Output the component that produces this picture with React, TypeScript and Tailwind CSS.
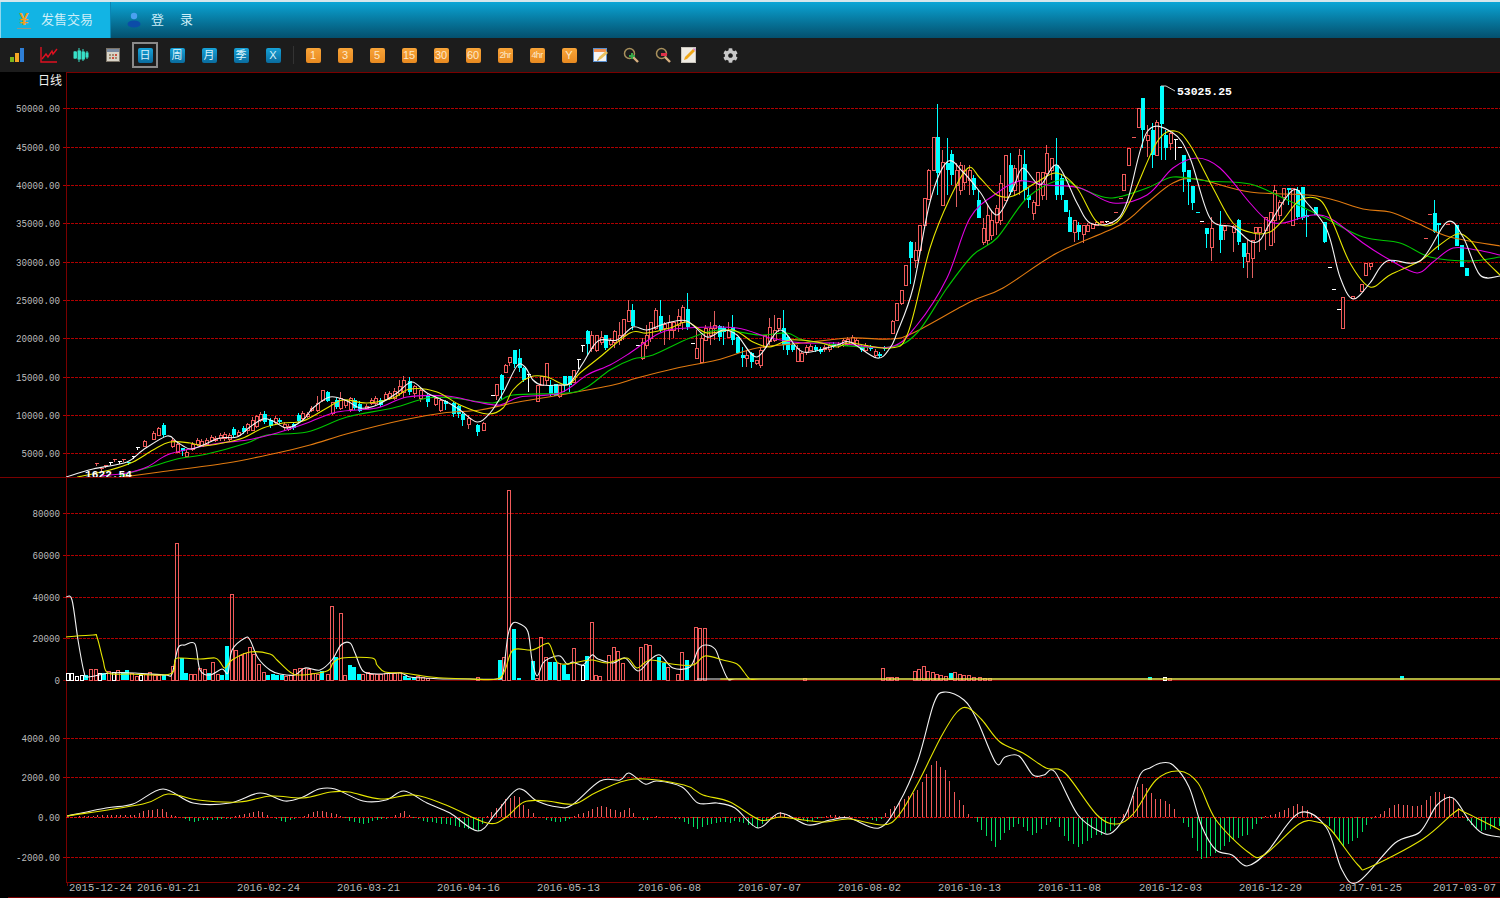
import type { ReactNode } from "react";
import { FaCog } from "react-icons/fa";

type Pt = [number, number];
type Candle = [number, number, number, number, number, "r" | "c" | "w"];

const ma5: Pt[] = [[66,477],[93,469],[127,462],[143,450],[167,436],[177,442],[190,449],[203,445],[220,438],[237,437],[250,427],[263,419],[273,421],[287,428],[303,420],[313,408],[330,397],[347,401],[360,408],[377,405],[397,393],[412,382],[427,393],[447,402],[460,410],[477,422],[490,413],[503,393],[517,366],[525,367],[533,380],[542,385],[560,385],[570,383],[583,363],[598,341],[617,340],[633,327],[647,330],[667,323],[687,321],[707,337],[723,330],[737,335],[757,357],[780,330],[803,352],[837,345],[850,342],[877,358],[890,348],[897,333],[913,288],[930,202],[947,162],[963,172],[980,192],[997,215],[1013,188],[1023,168],[1040,185],[1057,165],[1077,203],[1090,223],[1113,222],[1127,202],[1147,132],[1173,133],[1190,158],[1210,218],[1233,227],[1250,241],[1260,240],[1270,223],[1293,190],[1307,203],[1327,230],[1340,277],[1353,299],[1370,283],[1387,261],[1420,261],[1447,222],[1463,237],[1480,275],[1500,276]];
const ma10: Pt[] = [[77,477],[110,470],[133,462],[153,450],[170,442],[190,443],[203,446],[223,443],[243,438],[263,428],[283,423],[303,421],[327,408],[343,400],[367,403],[393,398],[410,389],[437,392],[460,405],[487,414],[503,408],[513,390],[530,377],[547,377],[567,385],[580,373],[600,357],[630,333],[647,333],[670,328],[687,322],[707,333],[733,330],[753,342],[770,347],[790,340],[817,342],[837,347],[850,343],[890,348],[908,333],[930,248],[950,198],[968,168],[980,178],[997,195],[1013,196],[1037,182],[1057,173],[1077,188],[1097,222],[1117,222],[1133,195],[1157,142],[1175,131],[1190,145],[1213,188],[1233,223],[1253,233],[1270,232],[1283,220],[1300,200],[1320,200],[1333,223],[1350,263],[1370,287],[1390,275],[1420,261],[1437,247],[1457,234],[1470,240],[1483,258],[1500,275]];
const ma20: Pt[] = [[100,476],[127,473],[147,467],[167,455],[190,449],[220,443],[247,440],[277,433],[307,423],[337,412],[377,408],[407,397],[447,396],[477,402],[500,405],[520,397],[560,393],[587,375],[610,365],[630,353],[660,333],[687,328],[737,328],[770,338],[803,343],[837,343],[890,347],[917,325],[947,278],[970,218],[997,193],[1020,181],[1047,185],[1080,188],[1113,203],[1147,195],[1173,168],[1197,158],[1220,168],[1250,203],[1267,220],[1283,223],[1313,215],[1333,220],[1363,243],[1390,260],[1417,273],[1433,262],[1453,248],[1477,250],[1500,255]];
const ma30: Pt[] = [[120,476],[157,465],[177,459],[207,454],[247,443],[267,435],[307,432],[347,417],[393,408],[427,398],[453,398],[493,403],[513,395],[567,393],[587,387],[610,370],[633,359],[653,355],[690,338],[720,330],[760,335],[787,333],[803,340],[837,345],[890,347],[917,333],[947,288],[973,255],[997,238],[1027,198],[1060,180],[1080,188],[1110,198],[1147,188],[1173,177],[1207,181],[1250,184],[1283,198],[1323,217],[1363,237],[1400,243],[1430,257],[1470,261],[1500,257]];
const ma60: Pt[] = [[123,477],[160,472],[227,463],[277,453],[310,445],[350,433],[403,420],[443,413],[480,410],[513,403],[560,395],[613,385],[637,378],[677,368],[717,360],[757,348],[803,343],[850,338],[890,339],[913,333],[970,302],[1003,288],[1057,253],[1120,225],[1147,203],[1173,183],[1197,179],[1250,192],[1317,196],[1363,209],[1390,212],[1417,223],[1450,237],[1500,246]];

const volWhite: Pt[] = [[66,597],[72,600],[78,640],[84,672],[88,677],[110,673],[135,673],[165,675],[172,674],[178,648],[185,645],[195,644],[200,670],[210,675],[222,669],[228,673],[232,650],[245,638],[250,640],[258,658],[270,670],[280,674],[295,675],[305,668],[320,670],[332,660],[341,645],[350,643],[355,653],[363,671],[377,674],[400,673],[410,677],[425,678],[443,679],[470,679],[497,679],[503,673],[508,635],[513,623],[520,624],[528,632],[532,660],[537,676],[543,663],[550,658],[560,656],[567,664],[573,662],[583,665],[592,655],[598,659],[613,663],[625,658],[638,671],[650,660],[660,655],[673,668],[690,667],[698,650],[705,645],[715,649],[721,664],[728,679],[735,679],[760,679],[1500,679]];
const volYellow: Pt[] = [[66,637],[93,635],[97,637],[103,660],[108,673],[130,674],[170,674],[175,660],[180,658],[200,659],[215,658],[220,662],[225,668],[232,660],[250,652],[270,654],[277,660],[290,672],[300,675],[327,671],[333,663],[342,658],[372,658],[377,665],[385,672],[403,673],[423,676],[443,678],[470,679],[497,679],[505,670],[513,650],[532,650],[545,644],[550,645],[557,662],[567,664],[583,661],[593,660],[607,663],[627,658],[637,668],[650,660],[672,664],[693,665],[705,656],[723,660],[737,664],[744,672],[750,679],[760,679],[780,679],[1500,679]];
const volBars: [number, number, "r" | "c" | "w"][] = [[68,673,"w"],[72,673,"w"],[77,676,"w"],[82,675,"w"],[86,675,"c"],[91,669,"r"],[96,669,"r"],[100,673,"w"],[104,673,"c"],[109,671,"r"],[114,672,"w"],[118,670,"r"],[123,672,"c"],[127,670,"c"],[132,673,"r"],[137,676,"r"],[141,675,"w"],[146,674,"r"],[150,672,"r"],[155,675,"r"],[159,675,"r"],[164,675,"c"],[173,666,"r"],[177,543,"r"],[182,658,"c"],[186,673,"c"],[191,674,"r"],[195,674,"r"],[200,668,"r"],[205,669,"r"],[209,673,"c"],[213,662,"r"],[218,674,"r"],[222,675,"c"],[227,646,"c"],[232,594,"r"],[236,650,"r"],[241,655,"r"],[245,653,"r"],[250,647,"r"],[254,654,"r"],[259,664,"r"],[264,672,"r"],[268,675,"c"],[273,674,"c"],[277,675,"c"],[282,675,"c"],[286,676,"r"],[291,675,"r"],[295,669,"r"],[300,668,"r"],[304,668,"r"],[309,669,"r"],[313,673,"r"],[318,674,"r"],[322,671,"c"],[328,674,"r"],[332,606,"r"],[336,657,"c"],[341,613,"r"],[345,675,"r"],[350,665,"c"],[354,667,"c"],[359,674,"c"],[363,674,"r"],[368,672,"r"],[372,674,"r"],[377,674,"r"],[381,674,"r"],[386,673,"r"],[391,673,"r"],[395,673,"r"],[400,672,"r"],[405,676,"c"],[409,678,"c"],[414,677,"c"],[418,676,"r"],[423,677,"r"],[428,678,"r"],[478,677,"r"],[500,660,"c"],[504,657,"r"],[509,490,"r"],[514,629,"c"],[519,678,"c"],[533,661,"c"],[537,678,"r"],[541,637,"r"],[546,657,"r"],[550,662,"c"],[555,662,"c"],[559,663,"r"],[564,665,"c"],[568,674,"c"],[574,648,"r"],[583,665,"w"],[587,656,"c"],[592,622,"r"],[596,675,"r"],[600,676,"r"],[609,655,"r"],[614,647,"r"],[618,651,"r"],[623,663,"r"],[641,647,"r"],[646,644,"r"],[650,645,"r"],[659,657,"c"],[664,663,"c"],[668,667,"r"],[678,674,"r"],[682,652,"r"],[687,660,"c"],[696,627,"r"],[700,628,"r"],[705,628,"r"],[805,678,"r"],[883,668,"r"],[888,677,"r"],[892,677,"r"],[897,677,"r"],[915,671,"r"],[919,669,"r"],[924,666,"r"],[928,671,"r"],[933,672,"r"],[937,674,"r"],[941,675,"r"],[946,676,"r"],[951,673,"c"],[955,672,"r"],[960,674,"r"],[964,675,"r"],[969,675,"r"],[974,677,"r"],[980,677,"r"],[985,678,"r"],[990,678,"r"],[1150,677,"c"],[1165,677,"w"],[1170,678,"r"],[1402,676,"c"]];

const macdWhite: Pt[] = [[67,816],[106,808],[133,804],[163,789],[193,803],[230,803],[260,793],[285,801],[303,797],[319,789],[335,789],[363,801],[386,800],[404,791],[427,803],[450,813],[478,831],[496,813],[518,789],[537,801],[558,807],[572,805],[600,781],[620,780],[629,773],[645,784],[657,781],[682,787],[698,803],[717,803],[735,808],[758,828],[780,813],[808,825],[830,820],[849,818],[879,828],[899,803],[918,760],[934,703],[945,692],[964,700],[977,720],[996,763],[1005,757],[1019,756],[1033,775],[1044,775],[1055,772],[1078,815],[1101,832],[1113,832],[1127,812],[1140,775],[1150,768],[1161,763],[1173,765],[1189,787],[1202,827],[1216,850],[1232,855],[1247,866],[1267,852],[1299,813],[1326,827],[1342,870],[1358,882],[1395,843],[1420,832],[1437,805],[1453,798],[1469,820],[1482,833],[1500,837]];
const macdYellow: Pt[] = [[67,816],[143,804],[168,794],[198,800],[239,802],[271,796],[303,798],[331,792],[349,792],[381,799],[414,795],[446,805],[487,823],[505,818],[524,802],[547,801],[574,804],[597,792],[634,779],[684,785],[703,795],[730,802],[760,820],[780,817],[803,820],[826,822],[849,819],[883,825],[899,815],[918,783],[941,737],[957,712],[968,708],[982,720],[1000,742],[1023,753],[1046,768],[1065,773],[1097,815],[1117,824],[1134,813],[1156,780],[1179,771],[1198,783],[1216,820],[1248,852],[1264,855],[1299,824],[1317,822],[1331,830],[1358,865],[1370,867],[1423,839],[1455,812],[1464,812],[1500,830]];

const candles: Candle[] = [
  [163,423,425,435,437,"c"],[158,427,428,435,435,"r"],[153,431,433,439,439,"r"],[144,440,441,446,447,"r"],[172,438,440,446,448,"r"],[177,442,444,452,452,"r"],[182,448,448,451,456,"c"],[186,450,452,456,456,"r"],
  [247,423,424,430,434,"r"],[252,417,420,430,431,"r"],[256,415,416,426,428,"r"],[260,412,414,420,422,"r"],[264,411,414,422,424,"c"],[270,418,420,426,428,"c"],
  [317,396,403,410,412,"r"],[322,390,390,400,402,"r"],[327,391,392,401,402,"c"],[332,402,402,413,415,"r"],[336,398,400,407,409,"c"],[340,392,398,408,410,"r"],[345,400,400,405,408,"r"],[350,397,398,409,412,"r"],[354,398,400,408,410,"c"],[359,401,404,411,412,"c"],
  [394,388,391,398,400,"r"],[399,380,386,393,396,"r"],[403,376,380,392,398,"r"],[409,377,381,392,395,"c"],[414,385,386,393,398,"r"],[420,388,390,398,402,"r"],[427,394,396,402,407,"c"],[435,396,398,404,406,"r"],[440,398,400,410,412,"r"],[445,400,401,404,410,"c"],[453,402,403,414,417,"c"],[458,405,406,414,418,"c"],[462,412,414,420,426,"c"],[468,415,418,424,429,"r"],
  [477,424,425,432,436,"c"],[483,422,423,430,430,"r"],[492,395,395,395,395,"w"],[496,384,384,395,400,"r"],[501,374,375,390,400,"c"],[505,364,365,372,372,"r"],[509,357,357,362,366,"r"],[514,350,350,364,368,"c"],[519,349,358,368,372,"c"],[523,367,368,380,382,"c"],[528,374,374,374,392,"w"],[537,385,385,401,401,"r"],[541,376,376,385,385,"r"],[546,363,363,380,385,"r"],[550,380,385,394,396,"c"],[555,384,384,396,396,"c"],[559,385,385,396,398,"r"],[564,376,376,385,392,"c"],[569,376,376,385,392,"c"],[573,370,370,382,382,"r"],[578,359,359,359,369,"w"],[582,345,345,345,352,"w"],[587,330,331,344,355,"c"],[591,331,335,348,352,"r"],[596,335,335,350,352,"r"],[601,331,337,342,345,"r"],[605,335,335,348,350,"c"],[610,338,340,344,346,"r"],[614,330,331,342,348,"r"],[619,322,335,340,345,"r"],[623,319,319,335,340,"r"],[628,300,310,321,321,"r"],[632,304,310,326,330,"c"],[637,345,345,345,345,"w"],[642,338,342,358,360,"r"],[646,325,335,345,349,"r"],[650,322,322,338,342,"r"],[655,308,310,328,330,"r"],[660,300,316,330,332,"c"],[664,322,324,328,345,"r"],[669,315,322,330,340,"r"],[673,322,322,330,338,"r"],[678,309,316,325,332,"r"],[682,305,307,322,330,"r"],[687,293,309,327,330,"c"],[692,343,343,343,343,"w"],[696,330,348,358,358,"r"],[701,335,338,362,362,"r"],[705,325,328,340,340,"r"],[710,322,328,335,345,"r"],[714,311,325,328,340,"r"],[719,325,326,337,341,"c"],[723,326,328,332,345,"c"],[728,322,330,337,337,"r"],[732,315,327,340,345,"c"],[737,337,337,353,353,"c"],[742,347,355,358,367,"c"],[746,350,355,358,367,"r"],[751,352,353,362,368,"c"],[756,360,360,363,365,"r"],[760,348,350,365,368,"r"],[764,335,335,347,347,"r"],[769,318,327,341,345,"r"],[774,315,330,340,342,"r"],[778,318,318,328,332,"r"],[783,310,328,345,350,"c"],[787,335,337,350,355,"c"],[792,343,345,350,352,"c"],[797,345,348,361,362,"r"],[801,352,353,361,362,"r"],
  [892,320,321,333,333,"r"],[896,303,303,320,320,"r"],[901,290,290,303,305,"r"],[905,265,265,285,285,"r"],[910,241,242,258,284,"c"],[915,242,250,260,268,"r"],[919,225,225,250,255,"r"],[924,198,198,225,225,"r"],[928,169,170,199,199,"r"],[933,137,137,170,170,"r"],[937,104,137,173,195,"c"],[942,150,162,205,205,"r"],[947,138,163,170,195,"c"],[951,150,154,175,185,"c"],[956,163,170,185,207,"r"],[960,162,165,190,195,"r"],[964,165,170,182,190,"r"],[969,165,170,180,195,"r"],[973,175,178,190,195,"c"],[978,190,200,218,218,"c"],[983,218,228,242,245,"r"],[987,205,215,240,245,"r"],[991,210,220,235,240,"r"],[996,205,208,222,235,"r"],[1000,175,183,220,225,"r"],[1005,155,155,200,200,"r"],[1010,153,165,192,195,"c"],[1014,165,168,190,195,"r"],[1019,149,155,180,195,"r"],[1024,150,164,190,200,"c"],[1028,188,195,200,208,"c"],[1033,200,202,213,220,"r"],[1037,172,172,205,205,"r"],[1042,172,172,195,200,"r"],[1046,145,153,173,200,"r"],[1051,158,158,170,180,"r"],[1056,138,165,195,200,"c"],[1061,175,178,195,200,"c"],[1065,200,200,212,212,"c"],[1069,210,217,232,232,"c"],[1074,220,220,232,242,"r"],[1078,222,225,232,240,"c"],[1083,225,225,234,243,"r"],[1087,223,225,231,232,"r"],[1092,224,224,228,228,"r"],[1096,222,222,225,225,"r"],[1101,221,221,222,223,"r"],[1106,221,221,222,223,"w"],[1110,222,222,223,224,"r"],[1115,212,212,212,212,"r"],[1120,198,198,198,198,"r"],[1123,174,174,190,190,"r"],[1128,148,148,165,165,"r"],[1133,137,137,137,137,"r"],[1138,108,108,127,127,"r"],[1142,98,98,130,148,"c"],[1147,125,135,140,157,"r"],[1152,123,130,155,168,"c"],[1156,120,122,155,155,"r"],[1161,86,86,124,160,"c"],[1165,130,135,148,160,"c"],[1170,132,133,143,150,"r"],[1175,139,139,139,160,"w"],[1179,147,147,147,147,"w"],[1183,155,155,172,192,"c"],[1188,170,170,182,205,"c"],[1192,186,186,203,210,"c"],[1197,212,212,213,213,"c"],[1201,221,221,221,221,"w"],[1206,228,228,234,248,"c"],[1211,217,228,247,261,"r"],[1220,211,225,240,253,"c"],[1224,226,226,230,240,"r"],[1233,225,226,232,252,"r"],[1238,219,220,242,245,"c"],[1243,243,243,257,268,"c"],[1247,240,253,261,278,"r"],[1252,240,240,258,278,"r"],[1255,227,227,232,240,"r"],[1259,227,227,232,252,"r"],[1265,217,217,230,250,"r"],[1270,212,212,245,245,"r"],[1274,185,190,220,243,"r"],[1279,200,202,215,220,"r"],[1283,188,188,197,205,"r"],[1288,188,188,190,205,"c"],[1292,188,188,225,225,"r"],[1297,187,190,217,220,"c"],[1302,187,187,218,220,"c"],[1306,210,215,217,237,"c"],[1315,207,207,215,215,"c"],[1324,222,222,242,243,"c"],[1329,267,267,267,267,"w"],[1333,289,289,289,289,"w"],[1338,309,309,309,309,"w"],[1342,297,297,328,328,"r"],[1352,296,296,298,298,"r"],[1361,284,284,291,291,"r"],[1365,263,263,275,275,"r"],[1370,263,263,266,270,"r"],[1392,261,261,262,262,"c"],[1425,238,238,238,238,"r"],[1429,214,214,214,214,"r"],[1434,200,213,232,233,"c"],[1438,223,223,225,250,"c"],[1447,224,224,224,224,"r"],[1456,225,225,246,246,"c"],[1461,245,245,267,267,"c"],[1466,268,268,276,276,"c"],[1484,277,277,277,277,"w"],
];

// little candles between the traced ones, following the short average
const at = (line: Pt[], x: number) => {
  for (let i = 1; i < line.length; i++) {
    if (x <= line[i][0]) {
      const [x0, y0] = line[i - 1];
      const [x1, y1] = line[i];
      return y0 + ((y1 - y0) * (x - x0)) / (x1 - x0);
    }
  }
  return line[line.length - 1][1];
};
const rnd = (n: number) => {
  const v = Math.sin(n * 91.7) * 4375.5;
  return v - Math.floor(v);
};
for (let x = 96; x < 890; x += 4.58) {
  if (candles.some((c) => Math.abs(c[0] - x) < 4) || (x > 477 && x < 803)) continue;
  const mid = at(ma5, x) - 2 + (rnd(x) - 0.5) * 8;
  const h = 1 + rnd(x + 3) * (x < 150 ? 2 : 5);
  const kind = rnd(x + 5) > 0.68 ? "c" : "r";
  if (x < 150) {
    candles.push([Math.round(x), mid - 1, mid - 1, mid - 1, mid + 2, rnd(x + 7) > 0.5 ? "w" : kind]);
  } else {
    candles.push([Math.round(x), mid - h / 2 - 2, mid - h / 2, mid + h / 2, mid + h / 2 + 2, kind]);
  }
}

const smooth = (p: Pt[]) => {
  let d = `M${p[0][0]} ${p[0][1]}`;
  for (let i = 0; i < p.length - 1; i++) {
    const a = p[i - 1] ?? p[i];
    const b = p[i];
    const c = p[i + 1];
    const e = p[i + 2] ?? c;
    const c1x = b[0] + (c[0] - a[0]) / 6;
    const c1y = b[1] + (c[1] - a[1]) / 6;
    const c2x = c[0] - (e[0] - b[0]) / 6;
    const c2y = c[1] - (e[1] - b[1]) / 6;
    d += `C${c1x} ${c1y} ${c2x} ${c2y} ${c[0]} ${c[1]}`;
  }
  return d;
};

const RED = "#f05a5a";
const CYAN = "#00ffff";

function CandleMark({ c }: { c: Candle }) {
  const [x0, hi, top, bot, lo, kind] = c;
  const x = Math.round(x0);
  const color = kind === "r" ? RED : kind === "c" ? CYAN : "#ffffff";
  const wick = kind === "r" ? "#e06060" : color;
  return (
    <g shapeRendering="crispEdges">
      {hi < top && <line x1={x + 0.5} x2={x + 0.5} y1={hi} y2={top} stroke={wick} />}
      {lo > bot && <line x1={x + 0.5} x2={x + 0.5} y1={bot} y2={lo} stroke={wick} />}
      {bot - top < 1 ? (
        <rect x={x - 1} y={top} width={4} height={1} fill={color} />
      ) : kind === "r" ? (
        <rect x={x - 1} y={Math.round(top) + 0.5} width={3} height={Math.max(1, Math.round(bot - top))} fill="#000" stroke={RED} />
      ) : (
        <rect x={x - 1.5} y={top} width={4} height={bot - top} fill={color} />
      )}
    </g>
  );
}

function VolBar({ x, top, kind }: { x: number; top: number; kind: "r" | "c" | "w" }) {
  if (kind === "c") return <rect x={x - 2} y={top} width={4} height={680 - top} fill={CYAN} shapeRendering="crispEdges" />;
  return <rect x={x - 1.5} y={top + 0.5} width={3} height={679.5 - top} fill="none" stroke={kind === "r" ? RED : "#fff"} shapeRendering="crispEdges" />;
}

const grid = [108, 147, 185, 223, 262, 300, 338, 377, 415, 453, 513, 555, 597, 638, 738, 777, 857];
const yLabels: [string, number][] = [["50000.00",108],["45000.00",147],["40000.00",185],["35000.00",223],["30000.00",262],["25000.00",300],["20000.00",338],["15000.00",377],["10000.00",415],["5000.00",453],["80000",513],["60000",555],["40000",597],["20000",638],["0",680],["4000.00",738],["2000.00",777],["0.00",817],["-2000.00",857]];
const dates: [string, number][] = [["2015-12-24",69],["2016-01-21",137],["2016-02-24",237],["2016-03-21",337],["2016-04-16",437],["2016-05-13",537],["2016-06-08",638],["2016-07-07",738],["2016-08-02",838],["2016-10-13",938],["2016-11-08",1038],["2016-12-03",1139],["2016-12-29",1239],["2017-01-25",1339],["2017-03-07",1433]];

function Chart() {
  const hist: number[] = [];
  for (let x = 70; x < 1500; x += 4.58) hist.push(x);
  return (
    <svg viewBox="0 72 1500 826" className="block h-[826px] w-[1500px] bg-black font-['Liberation_Mono',monospace]">
      <defs>
        <clipPath id="main"><rect x="66" y="73" width="1434" height="404" /></clipPath>
      </defs>
      {grid.map((y) => (
        <line key={y} x1="63" x2="1500" y1={y + 0.5} y2={y + 0.5} stroke="#b00000" strokeDasharray="3 1" shapeRendering="crispEdges" />
      ))}
      <g stroke="#7a0000" shapeRendering="crispEdges">
        <line x1="66.5" x2="66.5" y1="72" y2="883" />
        <line x1="66" x2="1500" y1="72.5" y2="72.5" />
        <line x1="0" x2="1500" y1="477.5" y2="477.5" />
        <line x1="63" x2="1500" y1="680.5" y2="680.5" />
        <line x1="66" x2="1500" y1="882.5" y2="882.5" />
        <line x1="8" x2="1500" y1="897.5" y2="897.5" />
        {[67,168,268,368,468,568,669,769,869,969,1069,1170,1270,1370,1464].map((x) => (
          <line key={x} x1={x + 0.5} x2={x + 0.5} y1="883" y2="886" />
        ))}
      </g>

      <g clipPath="url(#main)">
        {candles.map((c, i) => <CandleMark key={i} c={c} />)}
        <g fill="none" strokeWidth="1.1">
          <path d={smooth(ma60)} stroke="#e07a10" />
          <path d={smooth(ma30)} stroke="#00c800" />
          <path d={smooth(ma20)} stroke="#e000e0" />
          <path d={smooth(ma10)} stroke="#e6e600" />
          <path d={smooth(ma5)} stroke="#f2f2f2" />
        </g>
        <text x="85" y="478" fill="#fff" fontSize="11.5" fontWeight="700" textLength="47" lengthAdjust="spacingAndGlyphs">1622.54</text>
      </g>
      <polyline points="1161,86 1166,86 1175,91" fill="none" stroke="#cfcfcf" />
      <text x="1177" y="95" fill="#fff" fontSize="11.5" fontWeight="700" textLength="55" lengthAdjust="spacingAndGlyphs">53025.25</text>

      {volBars.map(([x, top, kind], i) => <VolBar key={i} x={x} top={top} kind={kind} />)}
      <path d={smooth(volWhite)} fill="none" stroke="#f2f2f2" strokeWidth="1.1" />
      <path d={smooth(volYellow)} fill="none" stroke="#e6e600" strokeWidth="1.1" />

      <g shapeRendering="crispEdges" strokeWidth="1">
        {hist.map((x) => {
          const h = (at(macdYellow, x) - at(macdWhite, x)) * 1.2;
          const px = Math.round(x) + 0.5;
          return <line key={x} x1={px} x2={px} y1="817" y2={817 - h} stroke={h > 0 ? RED : "#00e060"} />;
        })}
      </g>
      <line x1="66" x2="1500" y1="817.5" y2="817.5" stroke="#e01010" strokeDasharray="3 1" shapeRendering="crispEdges" />
      <path d={smooth(macdWhite)} fill="none" stroke="#f2f2f2" strokeWidth="1.1" />
      <path d={smooth(macdYellow)} fill="none" stroke="#e6e600" strokeWidth="1.1" />

      {yLabels.map(([t, y]) => (
        <text key={t + y} x="60" y={y + 4} textAnchor="end" fill="#bcbcbc" fontSize="11" textLength={t.length * 5.5} lengthAdjust="spacingAndGlyphs">{t}</text>
      ))}
      <text x="38" y="85" fill="#f0f0f0" fontSize="12" className="font-['Noto_Sans_CJK_SC',sans-serif]">日线</text>
      {dates.map(([t, x]) => (
        <text key={t} x={x} y="891" fill="#bcbcbc" fontSize="10.5">{t}</text>
      ))}
    </svg>
  );
}

function Bars() {
  return (
    <svg viewBox="0 0 16 16" className="h-4 w-4">
      <rect x="1" y="10" width="4" height="5" fill="#7ab51d" />
      <rect x="6" y="6" width="4" height="9" fill="#f5a623" />
      <rect x="11" y="1" width="4" height="14" fill="#2f7fd6" />
    </svg>
  );
}
function LineChart() {
  return (
    <svg viewBox="0 0 18 16" className="h-4 w-[18px]" fill="none" stroke="#e01020">
      <path d="M1 0v15h16" strokeWidth="1.4" />
      <path d="M2 12l4-5 2 3 4-6 1 3 4-5" strokeWidth="1.4" />
    </svg>
  );
}
function CandlesIcon() {
  return (
    <svg viewBox="0 0 16 14" className="h-[14px] w-4" fill="#38e0c8" stroke="#38e0c8">
      <path d="M2 3v8M6 0v14M10 1v12M14 3v8" strokeWidth="1" />
      <rect x="1" y="4" width="2.4" height="6" />
      <rect x="5" y="3" width="2.4" height="8" />
      <rect x="9" y="4" width="2.4" height="7" />
      <rect x="13" y="5" width="2" height="4" />
    </svg>
  );
}
function Calendar() {
  return (
    <svg viewBox="0 0 14 14" className="h-[14px] w-[14px]">
      <rect x="0.5" y="0.5" width="13" height="13" fill="#d8d4c8" stroke="#7c7468" />
      <rect x="1" y="1" width="12" height="3" fill="#7a8aa0" />
      <path d="M3 6h2v2H3zM6 6h2v2H6zM9 9h2v2H9zM3 9h2v2H3z" fill="#a08a70" />
      <path d="M9 6h2v2H9zM6 9h2v2H6z" fill="#d05040" />
    </svg>
  );
}
function Magnifier({ minus }: { minus?: boolean }) {
  return (
    <svg viewBox="0 0 16 16" className="h-4 w-4">
      <circle cx="6.5" cy="6.5" r="5" fill="none" stroke="#a8905c" strokeWidth="1.5" />
      <path d="M10 10l5 5" stroke="#d8b080" strokeWidth="2.4" />
      {minus ? <rect x="6" y="6" width="6" height="3" fill="#e03048" /> : <path d="M8 6h2v2h2v2h-2v2H8v-2H6V8h2z" fill="#38a848" />}
    </svg>
  );
}
function EditSheet() {
  return (
    <svg viewBox="0 0 16 16" className="h-4 w-4">
      <rect x="0.5" y="1.5" width="13" height="13" fill="#f4f4f4" stroke="#5a90d0" />
      <rect x="1" y="2" width="12" height="3" fill="#f09050" />
      <path d="M4 14l2-4 7-6 2 2-7 6z" fill="#e8c060" />
      <path d="M4 14l1-2 1 1z" fill="#806040" />
    </svg>
  );
}
function Pencil() {
  return (
    <svg viewBox="0 0 16 16" className="h-4 w-4">
      <rect x="0.5" y="0.5" width="14" height="15" fill="#f0ece4" stroke="#c8c4bc" />
      <path d="M3 13l1-3 8-8 2 2-8 8z" fill="#f0a818" />
      <path d="M12 2l2 2 1-1-2-2z" fill="#d880d0" />
    </svg>
  );
}

function Chip({ label, tone, selected }: { label: string; tone: "blue" | "orange"; selected?: boolean }) {
  const face =
    tone === "blue"
      ? "bg-linear-to-b from-[#16a2d8] to-[#0a6c9e] text-[#d8f2fb]"
      : "bg-linear-to-b from-[#f8a438] to-[#e88a20] text-[#fde8c8]";
  const size = label.length > 2 ? "text-[9px] tracking-[-0.6px]" : "text-[11px]";
  return (
    <div className="flex h-7 w-8 items-center justify-center">
      <div className={selected ? "flex h-[26px] w-[26px] items-center justify-center border-2 border-[#8a8a8a]" : "flex"}>
        <span className={`flex h-[15px] w-[15px] items-center justify-center rounded-[2px] leading-none ${size} ${face}`}>{label}</span>
      </div>
    </div>
  );
}

function Cell({ children }: { children: ReactNode }) {
  return <div className="flex h-7 w-8 items-center justify-center">{children}</div>;
}

export default function App() {
  return (
    <div className="flex h-[898px] w-[1500px] flex-col overflow-hidden bg-black font-['Liberation_Sans','Noto_Sans_CJK_SC',sans-serif]">
      <header className="flex h-[38px] border-t-2 border-[#d4e6ec] bg-linear-to-b from-[#0ba6d6] to-[#04506e]">
        <div className="flex w-[111px] items-center gap-[10px] border-r border-l border-[#0a86b4] border-l-[#8fd8ee] bg-[#12b4e4] pl-4">
          <span className="w-[14px] border-b border-[#8a9a90] text-center text-[17px] font-bold leading-none text-[#f0a020]">¥</span>
          <span className="text-[13px] text-[#cdeef8]">发售交易</span>
        </div>
        <div className="flex items-center pl-[16px]">
          <svg viewBox="0 0 14 16" className="h-4 w-[14px]">
            <circle cx="7" cy="4" r="3.2" fill="#4aa0f0" />
            <ellipse cx="7" cy="12" rx="6.5" ry="3.6" fill="#0c4ca8" />
          </svg>
          <span className="ml-[10px] text-[13px] text-[#cdeef8]">登</span>
          <span className="ml-[16px] text-[13px] text-[#cdeef8]">录</span>
        </div>
      </header>

      <div className="flex h-[34px] items-center bg-[#1c1c1c] pl-px">
        <Cell><Bars /></Cell>
        <Cell><LineChart /></Cell>
        <Cell><CandlesIcon /></Cell>
        <Cell><Calendar /></Cell>
        <Chip label="日" tone="blue" selected />
        <Chip label="周" tone="blue" />
        <Chip label="月" tone="blue" />
        <Chip label="季" tone="blue" />
        <Chip label="X" tone="blue" />
        <div className="ml-[4px] mr-[3px] h-[18px] w-px bg-[#333]" />
        <Chip label="1" tone="orange" />
        <Chip label="3" tone="orange" />
        <Chip label="5" tone="orange" />
        <Chip label="15" tone="orange" />
        <Chip label="30" tone="orange" />
        <Chip label="60" tone="orange" />
        <Chip label="2hr" tone="orange" />
        <Chip label="4hr" tone="orange" />
        <Chip label="Y" tone="orange" />
        <Cell><EditSheet /></Cell>
        <div className="-ml-[2px]"><Cell><Magnifier /></Cell></div>
        <Cell><Magnifier minus /></Cell>
        <div className="-ml-[6px] flex h-7 w-8 items-center justify-center"><Pencil /></div>
        <div className="ml-[9px] flex h-7 w-8 items-center justify-center text-[#c8c8c8]"><FaCog size={15} /></div>
      </div>

      <Chart />
    </div>
  );
}
